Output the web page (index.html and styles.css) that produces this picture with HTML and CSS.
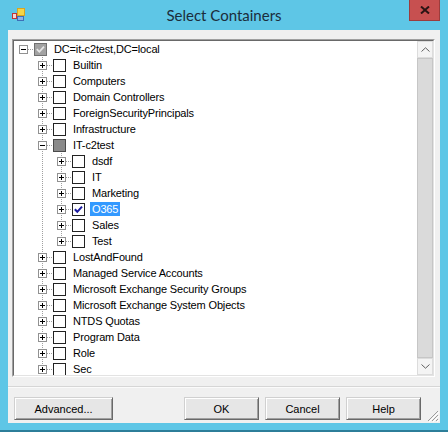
FILE: index.html
```html
<!DOCTYPE html>
<html>
<head>
<meta charset="utf-8">
<link rel="stylesheet" href="styles.css">
</head>
<body>
<div class="window">
  <div class="titlebar">
    <svg class="appicon" width="14" height="14" viewBox="0 0 14 14">
      <rect x="0.5" y="5.5" width="4" height="5" fill="#f3d6d6" stroke="#c03434"/>
      <rect x="5.5" y="0.5" width="7" height="7" fill="#f5d548" stroke="#d9a520"/>
      <rect x="5.5" y="8.5" width="6" height="4" fill="#8fb3e6" stroke="#3d6fb8"/>
    </svg>
    <div class="title">Select Containers</div>
    <div class="close">
      <svg width="10" height="8" viewBox="0 0 10 8"><path d="M1 0.5 L9 7.5 M9 0.5 L1 7.5" stroke="#2a1414" stroke-width="2"/></svg>
    </div>
  </div>
  <div class="client">
    <div class="treebox">
      <div class="treeinner">
        <div class="tree">
          <div class="row">
            <span class="x root"><svg class="ex" viewBox="0 0 9 9"><rect x="0.5" y="0.5" width="8" height="8" fill="#fff" stroke="#919191"/><path d="M2 4.5h5" stroke="#000"/></svg></span>
            <span class="cb grey"><svg viewBox="0 0 11 11"><path d="M1.8 5.2 L4.3 7.8 L9 2.6" fill="none" stroke="#e6e6e6" stroke-width="1.8"/></svg></span>
            <span class="lb">DC=it-c2test,DC=local</span>
          </div>
          <div class="row"><span class="g"></span><span class="x full"><svg class="ex" viewBox="0 0 9 9"><rect x="0.5" y="0.5" width="8" height="8" fill="#fff" stroke="#919191"/><path d="M2 4.5h5M4.5 2v5" stroke="#000"/></svg></span><span class="cb"></span><span class="lb">Builtin</span></div>
          <div class="row"><span class="g"></span><span class="x full"><svg class="ex" viewBox="0 0 9 9"><rect x="0.5" y="0.5" width="8" height="8" fill="#fff" stroke="#919191"/><path d="M2 4.5h5M4.5 2v5" stroke="#000"/></svg></span><span class="cb"></span><span class="lb">Computers</span></div>
          <div class="row"><span class="g"></span><span class="x full"><svg class="ex" viewBox="0 0 9 9"><rect x="0.5" y="0.5" width="8" height="8" fill="#fff" stroke="#919191"/><path d="M2 4.5h5M4.5 2v5" stroke="#000"/></svg></span><span class="cb"></span><span class="lb">Domain Controllers</span></div>
          <div class="row"><span class="g"></span><span class="x full"><svg class="ex" viewBox="0 0 9 9"><rect x="0.5" y="0.5" width="8" height="8" fill="#fff" stroke="#919191"/><path d="M2 4.5h5M4.5 2v5" stroke="#000"/></svg></span><span class="cb"></span><span class="lb">ForeignSecurityPrincipals</span></div>
          <div class="row"><span class="g"></span><span class="x full"><svg class="ex" viewBox="0 0 9 9"><rect x="0.5" y="0.5" width="8" height="8" fill="#fff" stroke="#919191"/><path d="M2 4.5h5M4.5 2v5" stroke="#000"/></svg></span><span class="cb"></span><span class="lb">Infrastructure</span></div>
          <div class="row"><span class="g"></span><span class="x full"><svg class="ex" viewBox="0 0 9 9"><rect x="0.5" y="0.5" width="8" height="8" fill="#fff" stroke="#919191"/><path d="M2 4.5h5" stroke="#000"/></svg></span><span class="cb ind"></span><span class="lb">IT-c2test</span></div>
          <div class="row"><span class="g"></span><span class="g v"></span><span class="x full"><svg class="ex" viewBox="0 0 9 9"><rect x="0.5" y="0.5" width="8" height="8" fill="#fff" stroke="#919191"/><path d="M2 4.5h5M4.5 2v5" stroke="#000"/></svg></span><span class="cb"></span><span class="lb">dsdf</span></div>
          <div class="row"><span class="g"></span><span class="g v"></span><span class="x full"><svg class="ex" viewBox="0 0 9 9"><rect x="0.5" y="0.5" width="8" height="8" fill="#fff" stroke="#919191"/><path d="M2 4.5h5M4.5 2v5" stroke="#000"/></svg></span><span class="cb"></span><span class="lb">IT</span></div>
          <div class="row"><span class="g"></span><span class="g v"></span><span class="x full"><svg class="ex" viewBox="0 0 9 9"><rect x="0.5" y="0.5" width="8" height="8" fill="#fff" stroke="#919191"/><path d="M2 4.5h5M4.5 2v5" stroke="#000"/></svg></span><span class="cb"></span><span class="lb">Marketing</span></div>
          <div class="row"><span class="g"></span><span class="g v"></span><span class="x full"><svg class="ex" viewBox="0 0 9 9"><rect x="0.5" y="0.5" width="8" height="8" fill="#fff" stroke="#919191"/><path d="M2 4.5h5M4.5 2v5" stroke="#000"/></svg></span><span class="cb"><svg viewBox="0 0 11 11"><path d="M1.8 5.2 L4.3 7.8 L9 2.6" fill="none" stroke="#1a1aa0" stroke-width="2"/></svg></span><span class="lb sel">O365</span></div>
          <div class="row"><span class="g"></span><span class="g v"></span><span class="x full"><svg class="ex" viewBox="0 0 9 9"><rect x="0.5" y="0.5" width="8" height="8" fill="#fff" stroke="#919191"/><path d="M2 4.5h5M4.5 2v5" stroke="#000"/></svg></span><span class="cb"></span><span class="lb">Sales</span></div>
          <div class="row"><span class="g"></span><span class="g v"></span><span class="x last"><svg class="ex" viewBox="0 0 9 9"><rect x="0.5" y="0.5" width="8" height="8" fill="#fff" stroke="#919191"/><path d="M2 4.5h5M4.5 2v5" stroke="#000"/></svg></span><span class="cb"></span><span class="lb">Test</span></div>
          <div class="row"><span class="g"></span><span class="x full"><svg class="ex" viewBox="0 0 9 9"><rect x="0.5" y="0.5" width="8" height="8" fill="#fff" stroke="#919191"/><path d="M2 4.5h5M4.5 2v5" stroke="#000"/></svg></span><span class="cb"></span><span class="lb">LostAndFound</span></div>
          <div class="row"><span class="g"></span><span class="x full"><svg class="ex" viewBox="0 0 9 9"><rect x="0.5" y="0.5" width="8" height="8" fill="#fff" stroke="#919191"/><path d="M2 4.5h5M4.5 2v5" stroke="#000"/></svg></span><span class="cb"></span><span class="lb">Managed Service Accounts</span></div>
          <div class="row"><span class="g"></span><span class="x full"><svg class="ex" viewBox="0 0 9 9"><rect x="0.5" y="0.5" width="8" height="8" fill="#fff" stroke="#919191"/><path d="M2 4.5h5M4.5 2v5" stroke="#000"/></svg></span><span class="cb"></span><span class="lb">Microsoft Exchange Security Groups</span></div>
          <div class="row"><span class="g"></span><span class="x full"><svg class="ex" viewBox="0 0 9 9"><rect x="0.5" y="0.5" width="8" height="8" fill="#fff" stroke="#919191"/><path d="M2 4.5h5M4.5 2v5" stroke="#000"/></svg></span><span class="cb"></span><span class="lb">Microsoft Exchange System Objects</span></div>
          <div class="row"><span class="g"></span><span class="x full"><svg class="ex" viewBox="0 0 9 9"><rect x="0.5" y="0.5" width="8" height="8" fill="#fff" stroke="#919191"/><path d="M2 4.5h5M4.5 2v5" stroke="#000"/></svg></span><span class="cb"></span><span class="lb">NTDS Quotas</span></div>
          <div class="row"><span class="g"></span><span class="x full"><svg class="ex" viewBox="0 0 9 9"><rect x="0.5" y="0.5" width="8" height="8" fill="#fff" stroke="#919191"/><path d="M2 4.5h5M4.5 2v5" stroke="#000"/></svg></span><span class="cb"></span><span class="lb">Program Data</span></div>
          <div class="row"><span class="g"></span><span class="x full"><svg class="ex" viewBox="0 0 9 9"><rect x="0.5" y="0.5" width="8" height="8" fill="#fff" stroke="#919191"/><path d="M2 4.5h5M4.5 2v5" stroke="#000"/></svg></span><span class="cb"></span><span class="lb">Role</span></div>
          <div class="row"><span class="g"></span><span class="x full"><svg class="ex" viewBox="0 0 9 9"><rect x="0.5" y="0.5" width="8" height="8" fill="#fff" stroke="#919191"/><path d="M2 4.5h5M4.5 2v5" stroke="#000"/></svg></span><span class="cb"></span><span class="lb">Sec</span></div>
        </div>
        <div class="vscroll">
          <div class="sbtn"><svg width="9" height="5" viewBox="0 0 9 5"><path d="M0.5 4.5 L4.5 0.8 L8.5 4.5" fill="none" stroke="#606060"/></svg></div>
          <div class="thumb"></div>
          <div class="sbtn"><svg width="9" height="5" viewBox="0 0 9 5"><path d="M0.5 0.5 L4.5 4.2 L8.5 0.5" fill="none" stroke="#606060"/></svg></div>
        </div>
      </div>
    </div>
    <div class="sep"></div>
    <div class="buttons">
      <button class="btn adv">Advanced...</button>
      <button class="btn">OK</button>
      <button class="btn">Cancel</button>
      <button class="btn">Help</button>
    </div>
  </div>
  <svg class="grip" width="12" height="12" viewBox="0 0 12 12">
    <path d="M11 1 L1 11 M11 5 L5 11 M11 9 L9 11" stroke="#9a9a9a" stroke-width="1"/>
    <path d="M12 2 L2 12 M12 6 L6 12 M12 10 L10 12" stroke="#ffffff" stroke-width="1"/>
  </svg>
</div>
</body>
</html>
```

FILE: styles.css
```css
* { box-sizing: border-box; }
html, body { margin: 0; padding: 0; }
body {
  width: 448px;
  height: 432px;
  overflow: hidden;
  font-family: "Liberation Sans", Arial, sans-serif;
  font-size: 11px;
  color: #000;
}
.window {
  position: relative;
  width: 448px;
  height: 432px;
  background: #5ec6e6;
  display: flex;
  flex-direction: column;
  border-bottom: 2px solid #2c7e99;
}
.titlebar {
  height: 30px;
  flex: none;
  display: grid;
  grid-template-columns: 1fr auto 1fr;
  align-items: start;
}
.appicon { margin: 8px 0 0 12px; }
.title {
  font-family: Lato, "Open Sans", sans-serif;
  font-size: 15px;
  line-height: 30px;
  color: #1b2d3b;
}
.close {
  justify-self: end;
  margin-right: 8px;
  width: 31px;
  height: 21px;
  background: #c75050;
  border: 1px solid #9c3c3c;
  border-top: none;
  display: flex;
  align-items: center;
  justify-content: center;
}
.client {
  height: 393px;
  margin: 0 8px;
  background: #f0f0f0;
  display: flex;
  flex-direction: column;
  padding-top: 9px;
}
.treebox {
  margin-left: 4px;
  width: 423px;
  height: 338px;
  border: 1px solid;
  border-color: #a0a0a0 #ffffff #ffffff #a0a0a0;
}
.treeinner {
  height: 100%;
  display: flex;
  border: 1px solid;
  border-color: #696969 #e3e3e3 #e3e3e3 #696969;
}
.tree {
  flex: 1;
  background: #fff;
  overflow: hidden;
}
.row {
  display: flex;
  align-items: center;
  height: 16px;
  white-space: nowrap;
}
.g, .x {
  flex: none;
  width: 19px;
  height: 16px;
}
.x {
  display: flex;
  align-items: flex-start;
  padding: 4px 0 0 5px;
}
.ex { width: 9px; height: 9px; display: block; }
.g.v {
  background: repeating-linear-gradient(#a0a0a0 0 1px, transparent 1px 2px) 9px 0 / 1px 16px no-repeat;
}
.x.full {
  background:
    repeating-linear-gradient(#a0a0a0 0 1px, transparent 1px 2px) 9px 0 / 1px 16px no-repeat,
    repeating-linear-gradient(to right, #a0a0a0 0 1px, transparent 1px 2px) 14px 8px / 6px 1px no-repeat;
}
.x.last {
  background:
    repeating-linear-gradient(#a0a0a0 0 1px, transparent 1px 2px) 9px 0 / 1px 8px no-repeat,
    repeating-linear-gradient(to right, #a0a0a0 0 1px, transparent 1px 2px) 14px 8px / 6px 1px no-repeat;
}
.x.root {
  background: repeating-linear-gradient(to right, #a0a0a0 0 1px, transparent 1px 2px) 14px 8px / 6px 1px no-repeat;
}
.cb {
  flex: none;
  width: 13px;
  height: 13px;
  margin-left: 1px;
  border: 1px solid #222;
  background: #fff;
  display: flex;
}
.cb svg { width: 11px; height: 11px; display: block; }
.cb.grey { background: #a2a2a2; border-color: #707070; }
.cb.ind { background: #8a8a8a; border-color: #4a4a4a; }
.lb {
  margin-left: 5px;
  padding: 0 2px;
  height: 14px;
  line-height: 14px;
  letter-spacing: -0.15px;
}
.lb.sel { background: #3399ff; color: #fff; }
.vscroll {
  flex: none;
  width: 16px;
  display: flex;
  flex-direction: column;
  background: #e8e8e8;
}
.sbtn {
  height: 17px;
  flex: none;
  background: #f4f4f4;
  border: 1px solid #dcdcdc;
  display: flex;
  align-items: center;
  justify-content: center;
}
.thumb {
  flex: 1;
  background: #dadada;
  border: 1px solid #c6c6c6;
}
.sep {
  margin-top: 9px;
  height: 2px;
  border-top: 1px solid #d6d6d6;
  border-bottom: 1px solid #fbfbfb;
}
.buttons {
  margin-top: 9px;
  display: flex;
  gap: 6px;
  padding: 0 19px 0 6px;
}
.btn {
  width: 75px;
  height: 23px;
  padding: 0;
  font-family: "Liberation Sans", Arial, sans-serif;
  font-size: 11px;
  color: #000;
  background: #e6e6e6;
  border: 1px solid;
  border-color: #d0d0d0 #696969 #696969 #d0d0d0;
  box-shadow: inset 1px 1px 0 #ffffff, inset -1px -1px 0 #a0a0a0;
}
.btn.adv { width: 99px; margin-right: auto; }
.grip {
  position: absolute;
  right: 9px;
  bottom: 8px;
}
```
